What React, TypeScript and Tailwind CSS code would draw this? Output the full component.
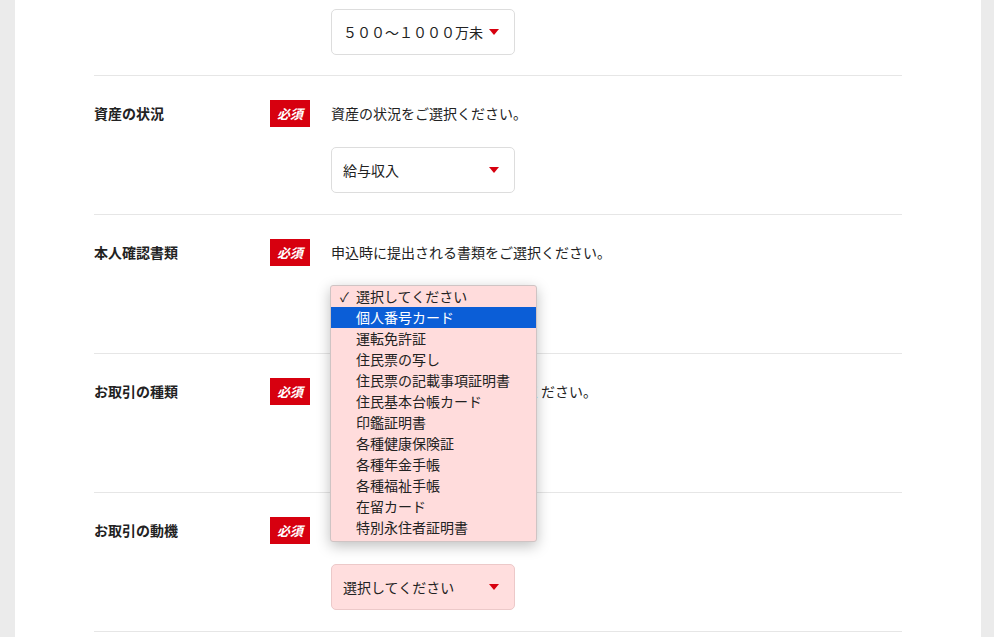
import React from 'react';

const font = { fontFamily: '"Noto Sans CJK JP", "Noto Sans", sans-serif' };

const options = [
  '選択してください',
  '個人番号カード',
  '運転免許証',
  '住民票の写し',
  '住民票の記載事項証明書',
  '住民基本台帳カード',
  '印鑑証明書',
  '各種健康保険証',
  '各種年金手帳',
  '各種福祉手帳',
  '在留カード',
  '特別永住者証明書',
];

const Arrow = () => (
  <svg width="10" height="6" viewBox="0 0 10 6" className="shrink-0">
    <path d="M0 0h10L5 6z" fill="#d7000f" />
  </svg>
);

interface selectProps {
  value: string;
  pink?: boolean;
  children?: React.ReactNode;
}

const SelectBox = ({ value, pink, children }: selectProps) => {
  return (
    <div className="relative w-[184px] h-[46px]">
      <div
        className={`w-full h-full rounded-[5px] border flex items-center justify-between gap-[6px] pl-[11px] pr-[15px] text-[14px] text-[#222] ${
          pink ? 'bg-[#ffdede] border-[#ecc9c9]' : 'bg-white border-[#dddddd]'
        }`}
      >
        <span className="whitespace-nowrap overflow-hidden">{value}</span>
        <Arrow />
      </div>
      {children}
    </div>
  );
};

interface rowProps {
  label: string;
  text: string;
  value: string;
  pink?: boolean;
  children?: React.ReactNode;
}

const FormRow = ({ label, text, value, pink, children }: rowProps) => {
  return (
    <section className="flex pt-[24px] pb-[21px] border-b border-[#e6e6e6]">
      <div className="w-[176px] h-[27px] flex items-center text-[14px] font-bold text-[#222]">{label}</div>
      <div className="w-[40px] h-[27px] bg-[#d7000f] text-white text-[13px] font-bold italic flex items-center justify-center">
        必須
      </div>
      <div className="ml-[21px] flex flex-col gap-[20px]">
        <p className="h-[27px] flex items-center text-[14px] text-[#222] whitespace-nowrap">{text}</p>
        <SelectBox value={value} pink={pink}>
          {children}
        </SelectBox>
      </div>
    </section>
  );
};

const Popup = () => (
  <ul className="absolute top-[-1px] left-[-1px] z-10 w-[207px] bg-[#ffdcdc] border border-[#cfc4c4] rounded-[3px] shadow-[0_4px_14px_rgba(0,0,0,0.25)] pb-[3px] text-[14px] text-[#222]">
    {options.map((o, i) => (
      <li
        key={o}
        className={`h-[21px] flex items-center whitespace-nowrap ${i === 1 ? 'bg-[#0b5ed7] text-white' : ''}`}
      >
        <span className="w-[25px] pl-[9px] text-[13px]">{i === 0 ? '✓' : ''}</span>
        {o}
      </li>
    ))}
  </ul>
);

export default function App() {
  return (
    <div className="min-h-screen bg-[#ebebeb] flex" style={font}>
      <main className="ml-[15px] w-[966px] bg-white pl-[79px] pr-[79px] overflow-hidden h-[637px]">
        <section className="pt-[9px] pb-[20px] border-b border-[#e6e6e6] pl-[237px]">
          <SelectBox value="５００～１０００万未" />
        </section>
        <FormRow label="資産の状況" text="資産の状況をご選択ください。" value="給与収入" />
        <FormRow label="本人確認書類" text="申込時に提出される書類をご選択ください。" value="選択してください" pink>
          <Popup />
        </FormRow>
        <FormRow label="お取引の種類" text="ご予定のお取引の種類をご選択ください。" value="選択してください" pink />
        <FormRow label="お取引の動機" text="お取引の動機をご選択ください。" value="選択してください" pink />
      </main>
    </div>
  );
}
